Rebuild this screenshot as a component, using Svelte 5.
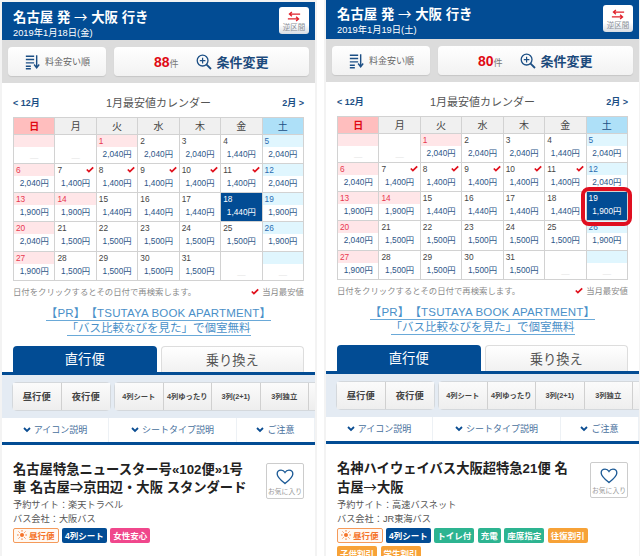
<script>
  const week = ["日", "月", "火", "水", "木", "金", "土"];
  const holidays = [1, 13, 14];

  const prices = {
    1: 2040, 2: 2040, 3: 2040, 4: 1440, 5: 2040, 6: 2040, 7: 1400, 8: 1400, 9: 1400, 10: 1400,
    11: 1400, 12: 2040, 13: 1900, 14: 1900, 15: 1440, 16: 1440, 17: 1440, 18: 1440, 19: 1900,
    20: 2040, 21: 1500, 22: 1500, 23: 1500, 24: 1500, 25: 1500, 26: 1900, 27: 1900, 28: 1500,
    29: 1500, 30: 1500, 31: 1500
  };

  // January 2019 starts on a tuesday, so 2 blanks in front and 2 behind
  const cells = [];
  for (let i = 0; i < 35; i++) {
    const day = i - 1;
    cells.push({ column: i % 7, day: day >= 1 && day <= 31 ? day : null });
  }

  const fmt = (n) => n.toLocaleString("en-US") + "円";

  const filters = ["4列シート", "4列ゆったり", "3列(2+1)", "3列独立", ""];

  const panels = [
    {
      id: "left",
      date: "2019年1月18日(金)",
      count: 88,
      selected: 18,
      circled: false,
      title: "名古屋特急ニュースター号«102便»1号車 名古屋⇒京田辺・大阪 スタンダード",
      site: "楽天トラベル",
      company: "大阪バス",
      badges: [
        { label: "4列シート", kind: "navy" },
        { label: "女性安心", kind: "pink" }
      ]
    },
    {
      id: "right",
      date: "2019年1月19日(土)",
      count: 80,
      selected: 19,
      circled: true,
      title: "名神ハイウェイバス大阪超特急21便 名古屋→大阪",
      site: "高速バスネット",
      company: "JR東海バス",
      badges: [
        { label: "4列シート", kind: "navy" },
        { label: "トイレ付", kind: "green" },
        { label: "充電", kind: "green" },
        { label: "座席指定", kind: "green" },
        { label: "往復割引", kind: "orange" },
        { label: "子供割引", kind: "orange" },
        { label: "学生割引", kind: "orange" }
      ]
    }
  ];
</script>

{#snippet check(cls)}
  <svg class={cls} viewBox="0 0 10 8" aria-hidden="true">
    <path d="M1 4l2.6 2.6L9 1.2" fill="none" stroke="#e0101c" stroke-width="2.2" />
  </svg>
{/snippet}

{#snippet chevron()}
  <svg class="chev" viewBox="0 0 8 6" aria-hidden="true">
    <path d="M1 1l3 3 3-3" fill="none" stroke="#0b4d92" stroke-width="1.8" />
  </svg>
{/snippet}

<div class="page">
  {#each panels as p}
    <section class="panel {p.id}">
      <header class="head">
        <div class="route">
          <h1>名古屋 発 <span class="arrow">→</span> 大阪 行き</h1>
          <p>{p.date}</p>
        </div>
        <button class="swap">
          <svg viewBox="0 0 16 12" aria-hidden="true">
            <path d="M15 3.2H3M5.6 .8L2.8 3.2l2.8 2.4M1 8.8h12M10.4 6.4l2.8 2.4-2.8 2.4" fill="none" stroke="#e0202a" stroke-width="1.5" />
          </svg>
          <span>逆区間</span>
        </button>
      </header>

      <div class="tools">
        <button class="sort">
          <svg viewBox="0 0 18 18" aria-hidden="true">
            <path d="M1 2h10M1 6h10M1 10h10M1 14h6M1 17h6" stroke="#1c4f85" stroke-width="1.7" fill="none" />
            <path d="M14 1v14M11 12l3 4 3-4" stroke="#1c4f85" stroke-width="1.7" fill="none" />
          </svg>
          <span>料金安い順</span>
        </button>
        <button class="change">
          <span class="count"><b>{p.count}</b>件</span>
          <svg viewBox="0 0 16 16" aria-hidden="true">
            <circle cx="6.6" cy="6.6" r="5.4" fill="none" stroke="#1c4f85" stroke-width="1.3" />
            <path d="M10.6 10.6l4.4 4.4" stroke="#1c4f85" stroke-width="1.8" />
            <path d="M6.6 3.8v5.6M3.8 6.6h5.6" stroke="#1c4f85" stroke-width="1.2" />
          </svg>
          <strong>条件変更</strong>
        </button>
      </div>

      <div class="body">
        <nav class="month">
          <a href="#prev">&lt; 12月</a>
          <span>1月最安値カレンダー</span>
          <a class="next" href="#next">2月 &gt;</a>
        </nav>

        <div class="cal">
          {#each week as w, i}
            <div class="dow" class:sun={i === 0} class:sat={i === 6}>{w}</div>
          {/each}
          {#each cells as c}
            <div
              class="cell"
              class:sun={c.column === 0 || holidays.includes(c.day)}
              class:sat={c.column === 6}
              class:selected={c.day === p.selected}
            >
              <div class="strip">
                <span>{c.day ?? ""}</span>
                {#if c.day >= 7 && c.day <= 11}{@render check("tick")}{/if}
              </div>
              <div class="price" class:none={!c.day}>{c.day ? fmt(prices[c.day]) : "—"}</div>
              {#if p.circled && c.day === p.selected}<i class="ring"></i>{/if}
            </div>
          {/each}
        </div>

        <div class="note">
          <span>日付をクリックするとその日付で再検索します。</span>
          <span class="legend">{@render check("tick")}当月最安値</span>
        </div>

        <a class="pr first" href="#pr">【PR】【TSUTAYA BOOK APARTMENT】</a>
        <a class="pr" href="#pr">「バス比較なびを見た」で個室無料</a>

        <div class="tabs">
          <div class="tab on">直行便</div>
          <div class="tab">乗り換え</div>
        </div>
      </div>

      <div class="filters">
        <div class="group time">
          <button>昼行便</button>
          <button>夜行便</button>
        </div>
        <div class="group seats">
          {#each filters as f}<button>{f}</button>{/each}
        </div>
      </div>

      <div class="info">
        <a href="#i1">{@render chevron()}アイコン説明</a>
        <a href="#i2">{@render chevron()}シートタイプ説明</a>
        <a href="#i3">{@render chevron()}ご注意</a>
      </div>

      <article class="card">
        <div class="detail">
          <h2>
            {#each p.title.split("→") as part, i}{#if i > 0}<span class="arrow">→</span>{/if}{part}{/each}
          </h2>
          <p>予約サイト：{p.site}</p>
          <p>バス会社：{p.company}</p>
        </div>
        <button class="fav">
          <svg viewBox="0 0 20 18" aria-hidden="true">
            <path d="M10 16.4C4 11.6 1.2 9 1.2 5.6 1.2 3 3.2 1.2 5.6 1.2c1.9 0 3.4 1 4.4 2.7 1-1.7 2.5-2.7 4.4-2.7 2.4 0 4.4 1.8 4.4 4.4 0 3.4-2.8 6-8.8 10.8z" fill="none" stroke="#1c5a96" stroke-width="1.5" />
          </svg>
          <span>お気に入り</span>
        </button>
        <div class="badges">
          <span class="badge day">
            <svg viewBox="0 0 12 12" aria-hidden="true">
              <circle cx="6" cy="6" r="2.4" fill="#f5742a" />
              <path d="M6 0v2M6 10v2M0 6h2M10 6h2M1.8 1.8l1.4 1.4M8.8 8.8l1.4 1.4M1.8 10.2l1.4-1.4M8.8 3.2l1.4-1.4" stroke="#f5742a" stroke-width="1.1" />
            </svg>
            昼行便
          </span>
          {#each p.badges as b}
            <span class="badge {b.kind}">{b.label}</span>
          {/each}
        </div>
      </article>
    </section>
  {/each}
</div>

<style>
  :global(body) {
    margin: 0;
    background: #fff;
  }

  .page {
    display: flex;
    gap: 11px;
    height: 556px;
    padding-left: 2px;
    overflow: hidden;
    font-family: "Liberation Sans", "Noto Sans CJK JP", sans-serif;
    color: #333;
  }

  .panel {
    flex: 0 0 313px;
    width: 313px;
    background: #fff;
    box-shadow: 0 0 0 2px #f3f3f3;
  }

  .panel.left {
    margin-top: 2px;
  }

  button {
    font-family: inherit;
    cursor: pointer;
  }

  a {
    text-decoration: none;
  }

  .arrow {
    font-family: "Noto Sans CJK JP", sans-serif;
    font-weight: normal;
  }

  .head {
    display: flex;
    justify-content: space-between;
    height: 38px;
    padding: 0 6px 0 11px;
    background: #024c94;
    color: #fff;
  }

  .right .head {
    height: 39px;
  }

  .route h1 {
    margin: 6px 0 0;
    font-size: 13.4px;
    line-height: 16px;
    font-weight: bold;
  }

  .right .route h1 {
    margin-top: 5px;
  }

  .route p {
    margin: 1px 0 0;
    font-size: 9.3px;
    line-height: 12px;
  }

  .swap {
    display: flex;
    flex-direction: column;
    align-items: center;
    width: 30px;
    height: 27px;
    margin-top: 5px;
    padding: 4px 0 0;
    border: 0;
    border-radius: 3px;
    background: linear-gradient(#fff 65%, #d8dde3);
  }

  .swap svg {
    width: 14px;
    height: 11px;
  }

  .swap span {
    margin-top: 1px;
    font-size: 7.5px;
    line-height: 9px;
    color: #8a8f96;
  }

  .tools {
    display: flex;
    gap: 8px;
    height: 43px;
    padding: 7px 6px;
    box-sizing: border-box;
    background: #dcdcdc;
  }

  .tools button {
    display: flex;
    align-items: center;
    border: 0;
    border-radius: 4px;
    background: linear-gradient(#fff, #f2f2f2);
    box-shadow: 0 1px 1px #c6c6c6;
  }

  .sort {
    flex: 0 0 98px;
    gap: 5px;
    padding: 0 0 0 17px;
    font-size: 9px;
    color: #666;
  }

  .sort svg {
    width: 15px;
    height: 16px;
  }

  .change {
    flex: 1;
    padding: 0 0 0 40px;
  }

  .count {
    font-size: 9px;
    color: #777;
  }

  .count b {
    font-size: 14px;
    color: #e00a14;
  }

  .change svg {
    width: 16px;
    height: 16px;
    margin-left: 17px;
  }

  .change strong {
    margin-left: 5px;
    font-size: 13px;
    color: #1c4a7c;
  }

  .body {
    padding: 0 11px;
  }

  .month {
    display: grid;
    grid-template-columns: 1fr auto 1fr;
    align-items: center;
    height: 22px;
    padding: 8px 0 4px;
    color: #555;
  }

  .month span {
    font-size: 11px;
  }

  .month a {
    font-size: 9px;
    font-weight: bold;
    color: #1c4f85;
  }

  .month .next {
    text-align: right;
  }

  .cal {
    display: grid;
    grid-template-columns: repeat(7, 1fr);
    gap: 1px;
    padding: 1px;
    background: #d2d2d2;
    grid-auto-rows: 28.3px;
    grid-template-rows: 15.5px;
  }

  .dow {
    display: flex;
    align-items: center;
    justify-content: center;
    background: #f0f0f0;
    font-size: 10px;
    color: #444;
  }

  .dow.sun {
    background: #ffbebe;
    color: #e00a14;
    font-weight: bold;
  }

  .dow.sat {
    background: #aee0f8;
    color: #1c4f85;
  }

  .cell {
    position: relative;
    background: #fff;
  }

  .strip {
    display: flex;
    justify-content: space-between;
    align-items: center;
    height: 12px;
    padding: 0 2px;
    font-size: 8.3px;
    color: #444;
  }

  .cell.sun .strip {
    background: #ffe6e8;
    color: #e8384f;
  }

  .cell.sat .strip {
    background: #e0f6fe;
    color: #2b6cb0;
  }

  .price {
    margin-top: 2px;
    text-align: center;
    font-size: 8.3px;
    line-height: 11px;
    color: #2d5688;
  }

  .price.none {
    margin-top: 3px;
    color: #e4e4e4;
    line-height: 16px;
  }

  .cell.selected {
    background: #024c94;
  }

  .cell.selected .strip,
  .cell.selected .price {
    background: none;
    color: #fff;
  }

  .ring {
    position: absolute;
    z-index: 1;
    inset: -5px -5px -6px -6px;
    border: 4px solid #e00f20;
    border-radius: 8px;
  }

  :global(.tick) {
    width: 8px;
    height: 7px;
  }

  .note {
    display: flex;
    justify-content: space-between;
    align-items: center;
    margin-top: 5px;
    font-size: 8.4px;
    line-height: 12px;
    color: #8a8a8a;
  }

  .legend {
    display: flex;
    align-items: center;
    gap: 3px;
  }

  .pr {
    display: table;
    margin: 0 auto;
    border-bottom: 1px solid #6aa9d8;
    font-size: 11.5px;
    line-height: 14px;
    color: #4a90c8;
    text-spacing-trim: space-all;
  }

  .pr.first {
    margin-top: 8px;
    letter-spacing: 0.17px;
  }

  .tabs {
    display: grid;
    grid-template-columns: 1fr 1fr;
    gap: 4px;
    margin-top: 10px;
    height: 26px;
  }

  .tab {
    display: flex;
    align-items: center;
    justify-content: center;
    box-sizing: border-box;
    border: 1px solid #ddd;
    border-bottom: 0;
    border-radius: 4px 4px 0 0;
    background: linear-gradient(#fff, #f1f1f1);
    font-size: 13.3px;
    color: #555;
  }

  .tab.on {
    border: 0;
    background: #024c94;
    color: #fff;
  }

  .filters {
    display: flex;
    gap: 5px;
    height: 46px;
    box-sizing: border-box;
    padding: 8px 0 8px 11px;
    border-top: 3px solid #024c94;
    background: #e4ebf3;
    overflow: hidden;
  }

  .group {
    display: flex;
    flex: none;
    border-radius: 4px;
    background: #f4f4f4;
    box-shadow: 0 0 0 1px #d4d8dc;
  }

  .group button {
    flex: 0 0 48.5px;
    padding: 0;
    border: 0;
    border-right: 1px solid #d0d0d0;
    background: linear-gradient(#fbfbfb, #eee);
    color: #444;
    font-weight: bold;
  }

  .time button {
    font-size: 9.3px;
  }

  .seats button {
    font-size: 7.3px;
  }

  .time button:last-child {
    border-right: 0;
  }

  .info {
    display: grid;
    grid-template-columns: 107px 128px 1fr;
    height: 24px;
    background: #fff;
  }

  .info a {
    display: flex;
    align-items: center;
    justify-content: center;
    gap: 3px;
    border-right: 1px solid #edf1f5;
    font-size: 9px;
    color: #47709c;
  }

  .chev {
    width: 8px;
    height: 6px;
  }

  .card {
    display: grid;
    grid-template-columns: 241px 38px;
    column-gap: 12px;
    padding: 16px 11px 0;
    border-top: 3px solid #024c94;
  }

  .detail h2 {
    margin: 0;
    font-size: 13.3px;
    line-height: 18px;
    color: #222;
  }

  .detail p {
    margin: 0;
    font-size: 9.2px;
    line-height: 14px;
    color: #555;
  }

  .detail h2 + p {
    margin-top: 1px;
  }

  .fav {
    display: flex;
    flex-direction: column;
    align-items: center;
    height: 36px;
    margin-top: 2px;
    padding: 5px 0 0;
    border: 1px solid #ccc;
    border-radius: 2px;
    background: #fff;
  }

  .fav svg {
    width: 18px;
    height: 16px;
  }

  .fav span {
    margin-top: 2px;
    font-size: 6.8px;
    line-height: 9px;
    white-space: nowrap;
    color: #999;
  }

  .badges {
    grid-column: 1 / -1;
    display: flex;
    flex-wrap: wrap;
    gap: 3px 3.5px;
    margin-top: 2px;
  }

  .badge {
    display: flex;
    align-items: center;
    gap: 2px;
    height: 15px;
    padding: 0 3px;
    border-radius: 2px;
    font-size: 8.5px;
    font-weight: bold;
    color: #fff;
  }

  .badge svg {
    width: 10px;
    height: 10px;
  }

  .day {
    box-sizing: border-box;
    border: 1px solid #f59a5a;
    background: #fff9f3;
    color: #f5742a;
  }

  .navy {
    background: #024c94;
  }

  .pink {
    background: #f0478c;
  }

  .green {
    background: #2db491;
  }

  .orange {
    background: #f7a237;
  }
</style>
